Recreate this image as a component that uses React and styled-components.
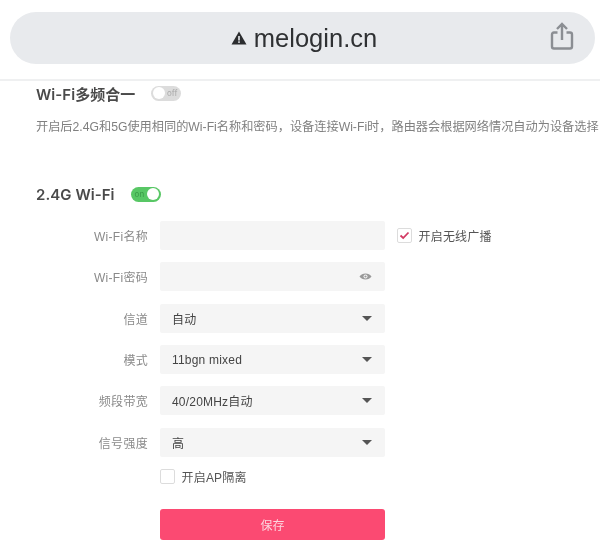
import React from "react";
import styled, { createGlobalStyle } from "styled-components";

const Global = createGlobalStyle`
  html, body { margin: 0; padding: 0; background: #fff; }
  body { width: 600px; height: 551px; overflow: hidden; font-family: "Liberation Sans", "Noto Sans CJK SC", sans-serif; }
`;

const Page = styled.div`
  width: 600px;
  height: 551px;
  overflow: hidden;
  display: flex;
  flex-direction: column;
  filter: blur(0.55px);
`;

const BrowserBar = styled.header`
  height: 67px;
  padding: 12px 0 0 9.5px;
  border-bottom: 2px solid #eff0f1;
  display: flex;
  justify-content: flex-start;
  align-items: flex-start;
`;

const AddressPill = styled.div`
  position: relative;
  width: 585px;
  height: 52px;
  padding-left: 4px;
  box-sizing: border-box;
  border-radius: 26px;
  background: #e8eaed;
  display: flex;
  align-items: center;
  justify-content: center;
  gap: 7px;
  color: #2f3133;
  font-size: 25.5px;
`;

const ShareButton = styled.span`
  position: absolute;
  right: 21px;
  top: 10px;
  display: flex;
`;

const Content = styled.main`
  padding: 2px 0 0 36px;
  display: flex;
  flex-direction: column;
`;

const TitleRow = styled.div`
  display: flex;
  align-items: center;
  gap: 16px;
  height: 20px;
  font-family: "Inter", "Noto Sans CJK SC", sans-serif;
  font-size: 15px;
  font-weight: 600;
  color: #4a4a4a;
  letter-spacing: 0.05px;
`;

const ToggleTrack = styled.span`
  position: relative;
  width: 30px;
  height: 15px;
  box-sizing: border-box;
  border-radius: 8px;
  display: block;
  background: ${(p) => (p.$on ? "#58c765" : "#dcdcdc")};
  font-size: 8px;
  font-weight: 400;
  line-height: 15px;
  letter-spacing: 0;
  color: ${(p) => (p.$on ? "#3a9a48" : "#a8a8a8")};
  text-align: ${(p) => (p.$on ? "left" : "right")};
  padding: 0 4px;
`;

const ToggleKnob = styled.span`
  position: absolute;
  top: 1.5px;
  ${(p) => (p.$on ? "right: 1.5px;" : "left: 1.5px;")}
  width: 12px;
  height: 12px;
  border-radius: 50%;
  background: #fff;
`;

const Description = styled.p`
  margin: 14px 0 0;
  width: 564px;
  height: 20px;
  overflow: hidden;
  font-size: 12.2px;
  line-height: 20px;
  color: #808080;
  white-space: nowrap;
`;

const SectionGap = styled.div`
  height: 47px;
`;

const Form = styled.div`
  margin-top: 17px;
  display: flex;
  flex-direction: column;
  gap: 12.35px;
`;

const Row = styled.div`
  display: flex;
  align-items: center;
  height: 29px;
`;

const Label = styled.label`
  width: 124px;
  text-align: right;
  font-size: 12px;
  letter-spacing: 0.3px;
  color: #8a8a8a;
  padding-right: 12px;
  box-sizing: border-box;
  flex: none;
`;

const Field = styled.div`
  width: 225px;
  height: 29px;
  flex: none;
  border-radius: 2px;
  background: #f5f5f5;
  box-sizing: border-box;
  padding: 0 13px 0 12px;
  display: flex;
  align-items: center;
  justify-content: space-between;
  font-size: 12px;
  letter-spacing: 0.2px;
  color: #444;
`;

const Caret = styled.span`
  width: 0;
  height: 0;
  border-left: 5px solid transparent;
  border-right: 5px solid transparent;
  border-top: 5.5px solid #555;
`;

const CheckGroup = styled.span`
  display: inline-flex;
  align-items: center;
  gap: 6.5px;
  font-size: 12px;
  letter-spacing: 0.2px;
  color: #555;
  margin-left: ${(p) => p.$ml}px;
`;

const CheckBox = styled.span`
  width: 15px;
  height: 15px;
  box-sizing: border-box;
  border: 1px solid #dcdcdc;
  border-radius: 2px;
  background: #fff;
  display: flex;
  align-items: center;
  justify-content: center;
`;

const OptionRow = styled.div`
  margin-left: 124px;
  height: 15px;
  display: flex;
`;

const SaveButton = styled.button`
  margin: 25px 0 0 124px;
  width: 225px;
  height: 31px;
  border: 0;
  border-radius: 3px;
  background: #fb4a72;
  color: #fcd5de;
  font-family: inherit;
  font-size: 12px;
  padding: 0;
`;

const Toggle = ({ on }) => (
  <ToggleTrack $on={on}>
    {on ? "on" : "off"}
    <ToggleKnob $on={on} />
  </ToggleTrack>
);

const selects = [
  ["信道", "自动"],
  ["模式", "11bgn mixed"],
  ["频段带宽", "40/20MHz自动"],
  ["信号强度", "高"],
];

export default function App() {
  return (
    <Page>
      <Global />
      <BrowserBar>
        <AddressPill>
          <svg width="16" height="14" viewBox="0 0 16 14">
            <path d="M8 0.5 L15.5 13.5 H0.5 Z" fill="#2b2d2f" />
            <rect x="7.2" y="5" width="1.6" height="4.5" fill="#e8eaed" />
            <rect x="7.2" y="10.3" width="1.6" height="1.6" fill="#e8eaed" />
          </svg>
          melogin.cn
          <ShareButton>
            <svg width="24" height="28" viewBox="0 0 24 28" fill="none" stroke="#8b8e93" strokeWidth="2.4">
              <path d="M7.5 10.5 H4 Q2 10.5 2 12.5 V24.5 Q2 26.5 4 26.5 H20 Q22 26.5 22 24.5 V12.5 Q22 10.5 20 10.5 H16.5" />
              <path d="M12 18 V2 M7 7 L12 2 L17 7" />
            </svg>
          </ShareButton>
        </AddressPill>
      </BrowserBar>
      <Content>
        <TitleRow>
          Wi-Fi多频合一
          <Toggle />
        </TitleRow>
        <Description>开启后2.4G和5G使用相同的Wi-Fi名称和密码，设备连接Wi-Fi时，路由器会根据网络情况自动为设备选择</Description>
        <SectionGap />
        <TitleRow>
          2.4G Wi-Fi
          <Toggle on />
        </TitleRow>
        <Form>
          <Row>
            <Label>Wi-Fi名称</Label>
            <Field />
            <CheckGroup $ml={12}>
              <CheckBox>
                <svg width="11" height="9" viewBox="0 0 11 9" fill="none" stroke="#d23a63" strokeWidth="1.8">
                  <path d="M1.5 4.5 L4.2 7 L9.5 1.5" />
                </svg>
              </CheckBox>
              开启无线广播
            </CheckGroup>
          </Row>
          <Row>
            <Label>Wi-Fi密码</Label>
            <Field>
              <span />
              <svg width="13" height="9" viewBox="0 0 13 9">
                <path d="M0.5 4.5 C3 0.5 10 0.5 12.5 4.5 C10 8.5 3 8.5 0.5 4.5 Z" fill="#999" />
                <circle cx="6.5" cy="4.5" r="2" fill="#f5f5f5" />
                <circle cx="6.5" cy="4.5" r="1.1" fill="#999" />
              </svg>
            </Field>
          </Row>
          {selects.map(([label, value]) => (
            <Row key={label}>
              <Label>{label}</Label>
              <Field>
                {value}
                <Caret />
              </Field>
            </Row>
          ))}
          <OptionRow>
            <CheckGroup $ml={0}>
              <CheckBox />
              开启AP隔离
            </CheckGroup>
          </OptionRow>
        </Form>
        <SaveButton>保存</SaveButton>
      </Content>
    </Page>
  );
}
